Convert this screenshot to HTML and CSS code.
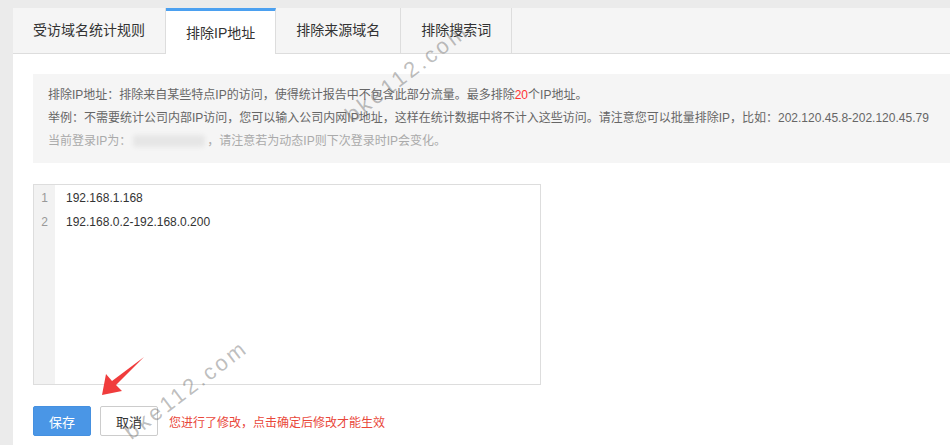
FILE: index.html
```html
<!doctype html>
<html><head>
<meta charset="UTF-8">
<title>排除IP地址</title>
<link rel="stylesheet" href="styles.css">
</head>
<body>
<div class="panel">
  <div class="tabs">
    <span class="tab">受访域名统计规则</span>
    <span class="tab active">排除IP地址</span>
    <span class="tab">排除来源域名</span>
    <span class="tab">排除搜索词</span>
  </div>
  <div class="content">
    <div class="tips">
      <p>排除IP地址：排除来自某些特点IP的访问，使得统计报告中不包含此部分流量。最多排除<em class="red">20</em>个IP地址。</p>
      <p>举例：不需要统计公司内部IP访问，您可以输入公司内网IP地址，这样在统计数据中将不计入这些访问。请注意您可以批量排除IP，比如：202.120.45.8-202.120.45.79</p>
      <p class="muted">当前登录IP为：<span class="ipmask"></span>，请注意若为动态IP则下次登录时IP会变化。</p>
    </div>
    <div class="editor">
      <div class="gutter">
        <div>1</div>
        <div>2</div>
      </div>
      <div class="lines">
        <div>192.168.1.168</div>
        <div>192.168.0.2-192.168.0.200</div>
      </div>
    </div>
    <div class="actions">
      <button class="btn primary">保存</button>
      <button class="btn">取消</button>
      <span class="warn">您进行了修改，点击确定后修改才能生效</span>
    </div>
  </div>
</div>

<span class="mark mark1">bke112.com</span>
<span class="mark mark2">bke112.com</span>
<svg class="arrow" width="950" height="445" viewBox="0 0 950 445">
  <polygon points="102,395 106,374 112,381 144,357 116,385 122,391" fill="#f03c3c"/>
</svg>
</body>
</html>
```

FILE: styles.css
```css
html, body {
    margin: 0;
    height: 100%;
}
body {
    background: #ebebeb;
    font-family: "Liberation Sans", "Noto Sans CJK SC", sans-serif;
    color: #333;
    overflow: hidden;
    position: relative;
}
.panel {
    margin: 8px -20px 0 13px;
    background: #fff;
    height: 100%;
}
.tabs {
    display: flex;
    height: 45px;
    background: #f5f5f5;
    border-bottom: 1px solid #ddd;
}
.tab {
    padding: 0 20px;
    line-height: 45px;
    font-size: 14px;
    border-right: 1px solid #ddd;
    color: #333;
}
.tab.active {
    background: #fff;
    border-top: 3px solid #4ba0f0;
    line-height: 44px;
    height: 43px;
}
.content {
    padding: 20px;
}
.tips {
    background: #f5f5f5;
    padding: 10px 15px;
    font-size: 12px;
    line-height: 23px;
    color: #666;
}
.tips p {
    margin: 0;
    white-space: nowrap;
}
.tips .muted {
    color: #aaa;
}
.red {
    color: #f33;
    font-style: normal;
}
.ipmask {
    display: inline-block;
    width: 72px;
    height: 12px;
    margin: 0 2px;
    vertical-align: -2px;
    background: #e6e6e6;
    border-radius: 4px;
    filter: blur(2px);
}
.editor {
    display: flex;
    width: 506px;
    height: 199px;
    margin-top: 21px;
    border: 1px solid #ddd;
    font-size: 12px;
    line-height: 24px;
}
.gutter {
    width: 21px;
    background: #f2f2f2;
    color: #999;
    text-align: center;
    padding-top: 1px;
}
.lines {
    padding: 1px 0 0 11px;
    color: #333;
}
.actions {
    display: flex;
    align-items: center;
    margin-top: 21px;
}
.btn {
    height: 30px;
    width: 58px;
    padding: 0;
    font-family: inherit;
    font-size: 13px;
    background: #fff;
    color: #333;
    border: 1px solid #ccc;
    border-radius: 2px;
    margin-right: 9px;
}
.btn.primary {
    background: #4a96e6;
    border-color: #4590e0;
    color: #fff;
}
.warn {
    margin-left: 2px;
    font-size: 12px;
    color: #e9473a;
}
.mark {
    position: absolute;
    font-size: 22px;
    letter-spacing: 3px;
    color: rgba(110, 110, 110, 0.45);
    transform: rotate(-37deg);
    white-space: nowrap;
}
.mark1 {
    left: 333px;
    top: 60px;
}
.mark2 {
    left: 112px;
    top: 377px;
}
.arrow {
    position: absolute;
    left: 0;
    top: 0;
    pointer-events: none;
}
```
